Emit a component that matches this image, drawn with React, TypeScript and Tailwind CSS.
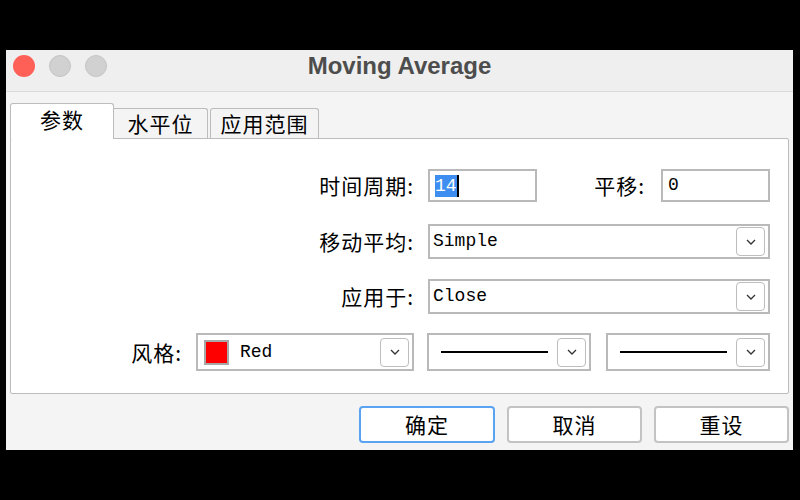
import React from "react";

const cjk = "font-['Noto_Sans_CJK_SC','Noto_Sans',sans-serif]";
const mono = "font-['Liberation_Mono',monospace]";

const Chevron = () => (
  <svg width="12" height="8" viewBox="0 0 12 8" fill="none">
    <path d="M2 2 L6 6 L10 2" stroke="#333" strokeWidth="1.3" />
  </svg>
);

const DropButton = () => (
  <div className="w-[29px] h-[29px] shrink-0 rounded-[4px] border border-[#bdbdbd] bg-white flex items-center justify-center">
    <Chevron />
  </div>
);

const Select = ({
  width,
  height = 35,
  children,
}: {
  width: number;
  height?: number;
  children: React.ReactNode;
}) => (
  <div
    className="flex items-center justify-between border-2 border-[#b9b9b9] bg-white pl-[1px] pr-[3px] shrink-0"
    style={{ width, height }}
  >
    <div className="flex items-center flex-1 min-w-0">{children}</div>
    <DropButton />
  </div>
);

const Label = ({ width, text }: { width: number; text: string }) => (
  <div
    className={`${cjk} text-[21px] tracking-[1px] leading-none text-black text-right shrink-0`}
    style={{ width }}
  >
    {text}
  </div>
);

const TrafficLight = ({ color }: { color: string }) => (
  <div className={`w-[22px] h-[22px] rounded-full ${color}`} />
);

export default function App() {
  return (
    <div className="w-[800px] h-[500px] bg-black pt-[50px] pl-[6px]">
      <div className="w-[787px] h-[400px] bg-[#f4f4f4] flex flex-col">
        {/* title bar */}
        <div className="h-[42px] bg-[#efefef] border-b border-[#d9d9d9] relative shrink-0">
          <div className="flex gap-[14px] pl-[7px] pt-[5px]">
            <TrafficLight color="bg-[#fe5f57]" />
            <TrafficLight color="bg-[#d1d1d1] border border-[#c4c4c4]" />
            <TrafficLight color="bg-[#d1d1d1] border border-[#c4c4c4]" />
          </div>
          <div className="absolute inset-x-0 top-[4px] flex justify-center pointer-events-none">
            <span className="font-['Liberation_Sans',sans-serif] font-bold text-[24px] text-[#4d4d4d] leading-none">
              Moving Average
            </span>
          </div>
        </div>

        <div className="px-[4px] flex flex-col flex-1">
          {/* tabs */}
          <div className="flex items-end h-[46px]">
            <div
              className={`${cjk} w-[104px] h-[36px] -mb-[1px] pb-[3px] bg-white border border-b-0 border-[#bcbcbc] rounded-t-[3px] text-[21px] tracking-[1px] text-black flex items-center justify-center relative z-10`}
            >
              参数
            </div>
            <div
              className={`${cjk} w-[94px] h-[30px] bg-[#f4f4f4] border border-b-0 border-l-0 border-[#bcbcbc] rounded-tr-[3px] text-[21px] tracking-[1px] text-black flex items-center justify-center`}
            >
              水平位
            </div>
            <div
              className={`${cjk} w-[109px] h-[30px] ml-[2px] bg-[#f4f4f4] border border-b-0 border-[#bcbcbc] rounded-t-[3px] text-[21px] tracking-[1px] text-black flex items-center justify-center`}
            >
              应用范围
            </div>
          </div>

          {/* parameter panel */}
          <div className="w-[779px] h-[256px] bg-white border border-[#bcbcbc] rounded-[2px] pt-[30px] flex flex-col">
            <div className="flex items-center h-[33px]">
              <Label width={403} text="时间周期:" />
              <div className="ml-[14px] w-[109px] h-[33px] border-2 border-[#b9b9b9] bg-white flex items-center pl-[5px]">
                <span className={`${mono} text-[18px] leading-[22px] bg-[#3d8ef0] text-white`}>14</span>
                <span className="w-[2px] h-[22px] bg-black" />
              </div>
              <Label width={108} text="平移:" />
              <div className="ml-[16px] w-[109px] h-[33px] border-2 border-[#b9b9b9] bg-white flex items-center pl-[5px]">
                <span className={`${mono} text-[18px] text-black`}>0</span>
              </div>
            </div>

            <div className="flex items-center h-[35px] mt-[22px]">
              <Label width={403} text="移动平均:" />
              <div className="ml-[14px]">
                <Select width={342}>
                  <span className={`${mono} text-[18px] text-black pl-[2px]`}>Simple</span>
                </Select>
              </div>
            </div>

            <div className="flex items-center h-[35px] mt-[20px]">
              <Label width={403} text="应用于:" />
              <div className="ml-[14px]">
                <Select width={342}>
                  <span className={`${mono} text-[18px] text-black pl-[2px]`}>Close</span>
                </Select>
              </div>
            </div>

            <div className="flex items-center h-[38px] mt-[19px]">
              <Label width={171} text="风格:" />
              <div className="ml-[14px]">
                <Select width={218} height={38}>
                  <span className="w-[25px] h-[25px] bg-[#ff0000] border-2 border-[#a8a8a8] ml-[5px]" />
                  <span className={`${mono} text-[18px] text-black ml-[11px]`}>Red</span>
                </Select>
              </div>
              <div className="ml-[13px]">
                <Select width={164} height={38}>
                  <span className="block w-[107px] h-[2px] bg-black ml-[11px]" />
                </Select>
              </div>
              <div className="ml-[15px]">
                <Select width={164} height={38}>
                  <span className="block w-[107px] h-[2px] bg-black ml-[11px]" />
                </Select>
              </div>
            </div>
          </div>

          {/* dialog buttons */}
          <div className="flex justify-end gap-[12px] mt-[12px]">
            <button
              className={`${cjk} w-[136px] h-[37px] rounded-[4px] border-2 border-[#5aa2f2] bg-white text-[21px] tracking-[1px] text-black`}
            >
              确定
            </button>
            <button
              className={`${cjk} w-[135px] h-[37px] rounded-[4px] border-2 border-[#c3c3c3] bg-white text-[21px] tracking-[1px] text-black`}
            >
              取消
            </button>
            <button
              className={`${cjk} w-[135px] h-[37px] rounded-[4px] border-2 border-[#c3c3c3] bg-white text-[21px] tracking-[1px] text-black`}
            >
              重设
            </button>
          </div>
        </div>
      </div>
    </div>
  );
}
